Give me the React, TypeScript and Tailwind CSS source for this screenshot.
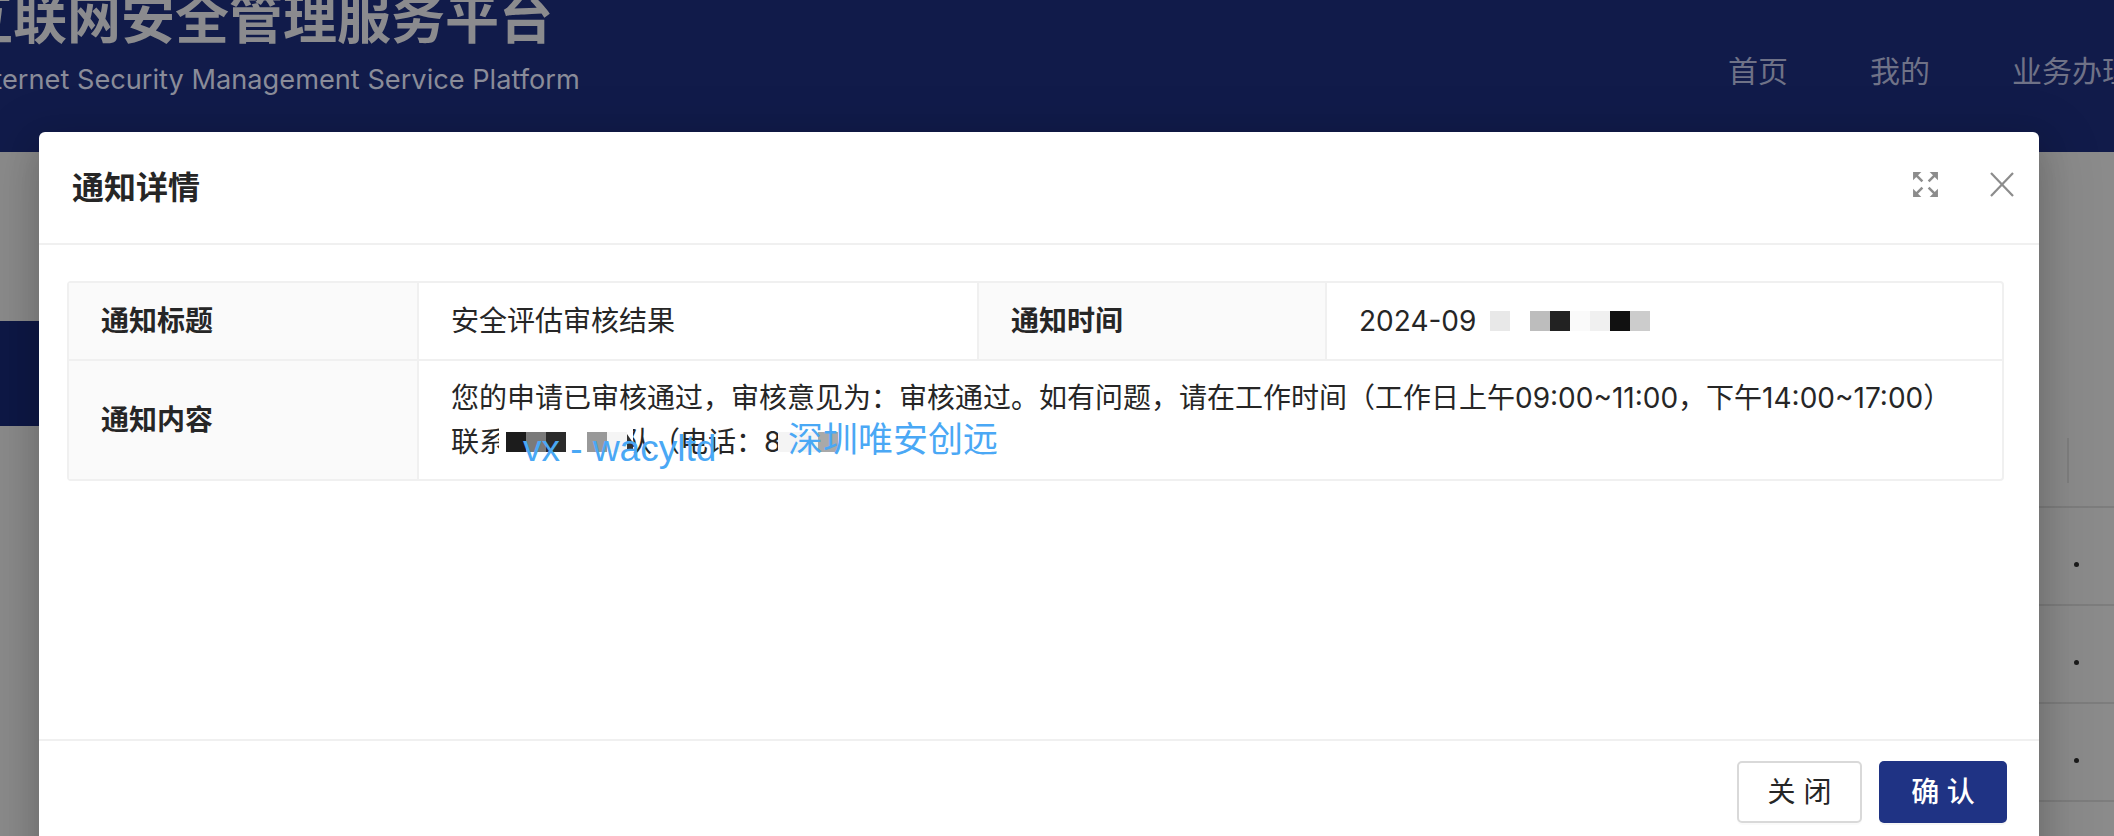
import React from 'react';

const cjk = "font-['Inter','Noto_Sans_CJK_SC',sans-serif]";

function Block({ c }: { c: string }) {
  return <span className={`inline-block h-[20px] w-[20px] shrink-0 ${c}`} />;
}

function ExpandIcon() {
  return (
    <svg width="27" height="27" viewBox="0 0 26 26" fill="#8c8c8c" stroke="#8c8c8c">
      <polygon points="1,1 9,1 1,9" stroke="none" />
      <line x1="4" y1="4" x2="10" y2="10" strokeWidth="2.4" />
      <polygon points="25,1 17,1 25,9" stroke="none" />
      <line x1="22" y1="4" x2="16" y2="10" strokeWidth="2.4" />
      <polygon points="1,25 1,17 9,25" stroke="none" />
      <line x1="4" y1="22" x2="10" y2="16" strokeWidth="2.4" />
      <polygon points="25,25 25,17 17,25" stroke="none" />
      <line x1="22" y1="22" x2="16" y2="16" strokeWidth="2.4" />
    </svg>
  );
}

function CloseIcon() {
  return (
    <svg width="24" height="25" viewBox="0 0 24 25" stroke="#8c8c8c" strokeWidth="2.2" fill="none">
      <line x1="1" y1="1" x2="23" y2="24" />
      <line x1="23" y1="1" x2="1" y2="24" />
    </svg>
  );
}

const navItems = ['首页', '我的', '业务办理'];
const dateBlocks = ['bg-[#e8e8e8]', 'bg-white', 'bg-[#bdbdbd]', 'bg-[#222222]', 'bg-[#fafafa]', 'bg-[#f0f0f0]', 'bg-[#111111]', 'bg-[#cccccc]'];

export default function App() {
  return (
    <div className={`relative h-[836px] w-[2114px] overflow-hidden bg-[#8b8b8b] ${cjk}`}>
      {/* page behind the mask */}
      <header className="flex h-[152px] bg-[#111b4a] overflow-hidden">
        <div className="w-[1728px] shrink-0">
          <div className="ml-[-41px] mt-[-7px] whitespace-nowrap text-[54px] font-bold leading-none text-[#8b8b8e]">
            互联网安全管理服务平台
          </div>
          <div className="ml-[-30px] mt-[19px] whitespace-nowrap font-['Inter',sans-serif] text-[27.2px] leading-none text-[#8a8c99]">
            Internet Security Management Service Platform
          </div>
        </div>
        <nav className="flex shrink-0 gap-[82px] whitespace-nowrap pt-[56px] text-[30px] leading-none text-[#6f7287]">
          {navItems.map(n => (
            <span key={n}>{n}</span>
          ))}
        </nav>
      </header>

      <div className="flex">
        <aside className="w-[300px] shrink-0">
          <div className="h-[169px]" />
          <div className="h-[105px] bg-[#0e1846]" />
        </aside>
        <main className="flex-1 pt-[262px]">
          <div className="flex h-[94px] items-center justify-end border-b-2 border-[#7d7d7d] pr-[45px]">
            <div className="h-[45px] w-[2px] bg-[#7f7f7f]" />
          </div>
          {[0, 1, 2, 3].map(i => (
            <div key={i} className="flex h-[98px] items-center justify-end border-b-2 border-[#7d7d7d] pr-[35px]">
              <span className="mt-[16px] h-[5px] w-[5px] rounded-full bg-[#1a1a1a]" />
            </div>
          ))}
        </main>
      </div>

      {/* modal */}
      <div className="absolute left-[39px] top-[132px] flex h-[760px] w-[2000px] flex-col rounded-[6px] bg-white shadow-[0_12px_32px_0_rgba(0,0,0,0.16),0_18px_56px_16px_rgba(0,0,0,0.1)]">
        <div className="flex h-[113px] shrink-0 items-center justify-between border-b-2 border-[#f0f0f0] pl-[33px] pr-[25px]">
          <div className="text-[32px] font-semibold leading-none text-[#262626]">通知详情</div>
          <div className="mt-[-6px] flex items-center gap-[51px]">
            <ExpandIcon />
            <CloseIcon />
          </div>
        </div>

        <div className="h-[494px] shrink-0 pt-[36px]">
          <div className="ml-[28px] mr-[35px] grid grid-cols-[348px_560px_348px_1fr] rounded-[4px] border-2 border-[#f0f0f0] text-[28px] text-[#262626]">
            <div className="flex h-[76px] items-center bg-[#fafafa] px-[32px] font-semibold">通知标题</div>
            <div className="flex h-[76px] items-center border-l-2 border-[#f0f0f0] px-[32px]">安全评估审核结果</div>
            <div className="flex h-[76px] items-center border-l-2 border-[#f0f0f0] bg-[#fafafa] px-[32px] font-semibold">通知时间</div>
            <div className="flex h-[76px] items-center border-l-2 border-[#f0f0f0] px-[32px]">
              <span className="mr-[14px]">2024-09</span>
              {dateBlocks.map((c, i) => (
                <Block key={i} c={c} />
              ))}
            </div>

            <div className="flex items-center border-t-2 border-[#f0f0f0] bg-[#fafafa] px-[32px] font-semibold">通知内容</div>
            <div className="relative col-span-3 border-l-2 border-t-2 border-[#f0f0f0] px-[32px] py-[15px]">
              <div className="flex h-[44px] items-center whitespace-nowrap">
                您的申请已审核通过，审核意见为：审核通过。如有问题，请在工作时间（工作日上午09:00~11:00，下午14:00~17:00）
              </div>
              <div className="flex h-[44px] items-center whitespace-nowrap">
                <span>联</span>
                <span className="inline-block w-[20px] overflow-hidden">系</span>
                <span className="w-[7px]" />
                <Block c="bg-[#1c1c1c]" />
                <Block c="bg-[#7a7a7a]" />
                <Block c="bg-[#2b2b2b]" />
                <span className="w-[21px]" />
                <Block c="bg-[#999999]" />
                <Block c="bg-[#f5f5f5]" />
                <span className="h-[16px] w-[6px] bg-[#333333] [clip-path:polygon(0_0,100%_55%,100%_100%,0_100%)]" />
                <span className="flex w-[19px] justify-end overflow-hidden">队</span>
                <span>（电话：</span>
                <span className="inline-block w-[14px] overflow-hidden">8</span>
                <Block c="bg-[#f4f4f4]" />
                <Block c="bg-[#f4f4f4]" />
                <Block c="bg-[#a9a9a9]" />
              </div>
              <span className="absolute left-[104px] top-[69px] whitespace-nowrap font-['Liberation_Sans',sans-serif] text-[37px] leading-none text-[#4aa8f5]">
                vx - wacyltd
              </span>
              <span className="absolute left-[369px] top-[61px] whitespace-nowrap text-[35px] leading-none text-[#4aa8f5]">
                深圳唯安创远
              </span>
            </div>
          </div>
        </div>

        <div className="flex flex-1 justify-end gap-[17px] border-t-2 border-[#f0f0f0] pr-[32px] pt-[20px]">
          <button className="h-[62px] w-[125px] rounded-[5px] border-2 border-[#d9d9d9] bg-white text-[28px] leading-none text-[#262626] shadow-[0_2px_0_rgba(0,0,0,0.02)]">
            关 闭
          </button>
          <button className="h-[62px] w-[128px] rounded-[5px] bg-[#1f3384] text-[28px] font-medium leading-none text-white shadow-[0_2px_0_rgba(0,0,0,0.04)]">
            确 认
          </button>
        </div>
      </div>
    </div>
  );
}
